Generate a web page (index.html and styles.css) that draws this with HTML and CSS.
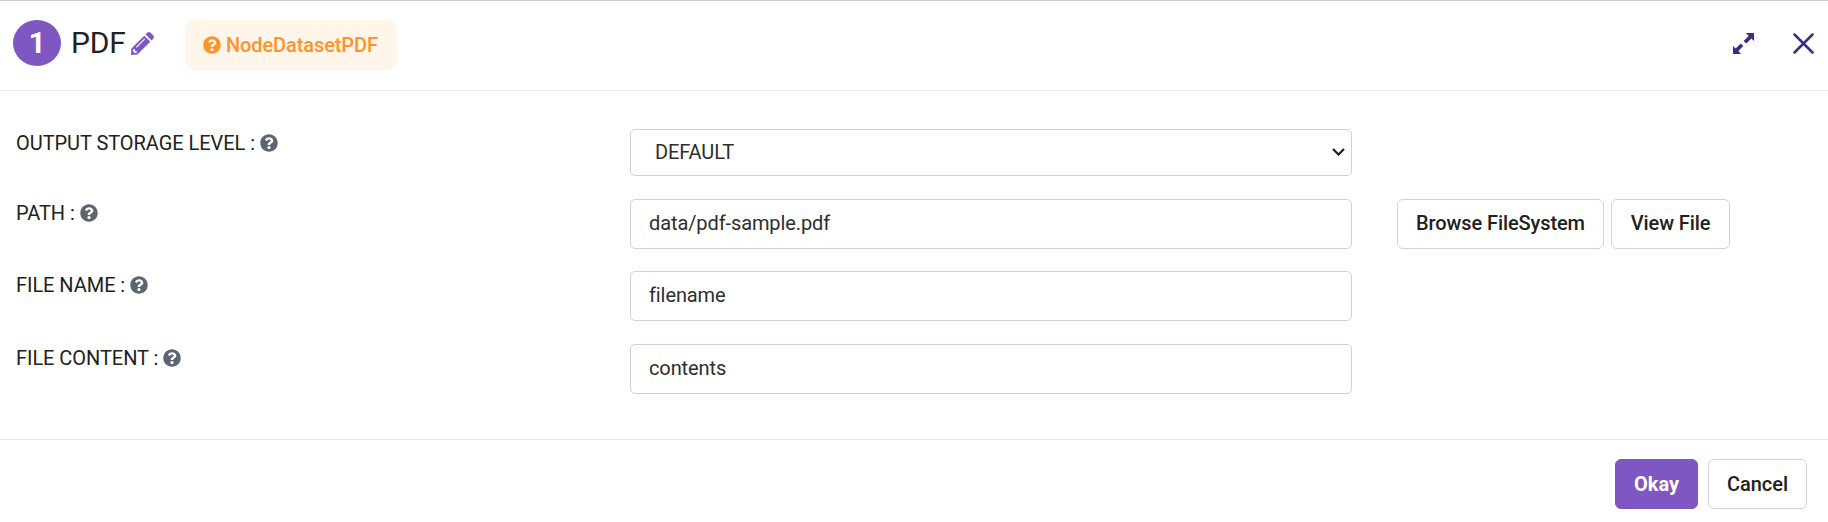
FILE: index.html
```html
<!DOCTYPE html>
<html lang="en">
<head>
<meta charset="utf-8">
<title>PDF</title>
<link rel="stylesheet" href="styles.css">
</head>
<body>
<svg class="sprite" aria-hidden="true">
  <symbol id="help" viewBox="0 0 512 512"><path fill="currentColor" d="M504 256c0 137-111 248-248 248S8 393 8 256C8 119.100 119 8 256 8s248 111.100 248 248zM262.700 90c-54.500 0-89.300 23-116.500 63.800-3.500 5.300-2.400 12.400 2.700 16.300l34.700 26.300c5.200 3.900 12.600 3 16.700-2.100 17.900-22.700 30.100-35.800 57.300-35.800 20.400 0 45.700 13.100 45.700 33 0 15-12.400 22.700-32.500 34C247.100 238.500 216 254.900 216 296v4c0 6.600 5.400 12 12 12h56c6.600 0 12-5.400 12-12v-1.300c0-28.500 83.200-29.600 83.200-106.700 0-58-60.200-102-116.500-102zM256 338c-25.400 0-46 20.600-46 46 0 25.400 20.600 46 46 46s46-20.600 46-46c0-25.400-20.600-46-46-46z"/></symbol>
</svg>
<div class="dialog">
  <header class="header">
    <span class="step">1</span>
    <h1 class="title">PDF</h1>
    <svg class="pencil" viewBox="0 0 23 23"><path fill="currentColor" d="M13.300 3.700 19.300 9.700 6.400 22.600 0 23 .4 16.600zM14.600 2.400 16.500.6Q18-.6 19.500.7L22.300 3.500Q23.600 5 22.400 6.500L20.600 8.400z"/><path d="M5.300 15.300 13.700 6.900" stroke="#fff" stroke-width="1.100" fill="none"/><path d="M2.400 17 3.800 17.300 4.100 18.900 5.700 19.200 6 20.600 3.800 21 2 19.200z" fill="#fff"/></svg>
    <span class="badge"><svg class="help"><use href="#help"/></svg>NodeDatasetPDF</span>
    <div class="tools">
      <svg class="expand" viewBox="0 0 21 21"><path fill="currentColor" d="M13 0H21V8L18.400 5.600 13.300 10.500 10.700 8 15.600 2.900zM8 21H0V13L2.600 15.400 7.700 10.500 10.300 13 5.400 18.100z"/></svg>
      <svg class="close" viewBox="0 0 21 21"><path d="M1.500 1.500 19.500 19.500M19.500 1.500 1.500 19.500" stroke="currentColor" stroke-width="2.500" stroke-linecap="round"/></svg>
    </div>
  </header>
  <main class="form">
    <div class="row">
      <label class="label">OUTPUT STORAGE LEVEL : <svg class="help"><use href="#help"/></svg></label>
      <div class="field select">DEFAULT<svg class="chevron" viewBox="0 0 13 8"><path d="M1 1 6.500 6.500 12 1" fill="none" stroke="currentColor" stroke-width="2.200"/></svg></div>
    </div>
    <div class="row">
      <label class="label">PATH : <svg class="help"><use href="#help"/></svg></label>
      <div class="field">data/pdf-sample.pdf</div>
      <div class="actions"><button class="btn browse">Browse FileSystem</button><button class="btn view">View File</button></div>
    </div>
    <div class="row">
      <label class="label">FILE NAME : <svg class="help"><use href="#help"/></svg></label>
      <div class="field">filename</div>
    </div>
    <div class="row">
      <label class="label">FILE CONTENT : <svg class="help"><use href="#help"/></svg></label>
      <div class="field">contents</div>
    </div>
  </main>
  <footer class="footer"><button class="btn okay">Okay</button><button class="btn cancel">Cancel</button></footer>
</div>
</body>
</html>
```
FILE: styles.css
```css
* { box-sizing: border-box; }
body { margin: 0; background: #fff; color: #212121; font: 400 20px/28px Roboto, sans-serif; }
.sprite { display: none; }
.dialog { height: 522px; display: flex; flex-direction: column; border-top: 1px solid #ccc; overflow: hidden; }
.header { height: 90px; flex: none; display: flex; align-items: flex-start; padding: 19px 14px 0 13px; border-bottom: 1px solid #e9e9e9; }
.step { width: 48px; height: 46px; border-radius: 50%; background: #7e57c2; color: #fff; font-size: 30px; font-weight: 700; line-height: 45px; text-align: center; }
.title { margin: 0 0 0 10px; width: 60px; font-size: 30px; font-weight: 400; line-height: 45px; letter-spacing: -.2px; }
.pencil { width: 23px; height: 23px; margin: 12px 0 0; color: #7e57c2; overflow: visible; }
.badge { width: 212px; height: 50px; margin-left: 31px; padding-left: 18px; display: flex; align-items: center; gap: 5px; border-radius: 10px; background: #fff5e9; color: #ff922b; font-weight: 500; letter-spacing: -.1px; }
.help { width: 18px; height: 18px; flex: none; color: #5d6570; }
.badge .help { color: inherit; }
.tools { margin: 13px 0 0 auto; display: flex; gap: 39px; color: #3f2a84; }
.expand, .close { width: 21px; height: 21px; }
.form { height: 348px; flex: none; padding: 38px 0 0 16px; display: grid; grid-template-rows: 70px 72px 73px 50px; }
.row { display: grid; grid-template-columns: 614px 722px auto; justify-content: start; align-items: start; }
.label { display: flex; align-items: center; gap: 5px; white-space: nowrap; letter-spacing: -.05px; }
.field { height: 50px; display: flex; align-items: center; padding: 0 18px 2px; border: 1px solid #ced1da; border-radius: 5px; color: #2e2e2e; letter-spacing: -.1px; }
.select { height: 47px; padding: 0 6px 1px 24px; justify-content: space-between; }
.chevron { width: 13px; height: 8px; color: #212121; }
.actions { display: flex; gap: 7px; margin-left: 45px; }
.btn { height: 50px; padding: 0 0 2px; border: 1px solid #ced3dc; border-radius: 6px; background: #fff; color: #212121; font: 500 20px/28px Roboto, sans-serif; letter-spacing: -.1px; }
.browse { width: 207px; }
.view { width: 119px; }
.footer { flex: 1; display: flex; justify-content: flex-end; gap: 10px; padding: 19px 21px 0 0; border-top: 1px solid #e9e9e9; }
.footer .btn { padding: 0; letter-spacing: 0; }
.okay { width: 83px; border-color: #7e57c2; background: #7e57c2; color: #fff; font-weight: 700; }
.cancel { width: 99px; }
```
